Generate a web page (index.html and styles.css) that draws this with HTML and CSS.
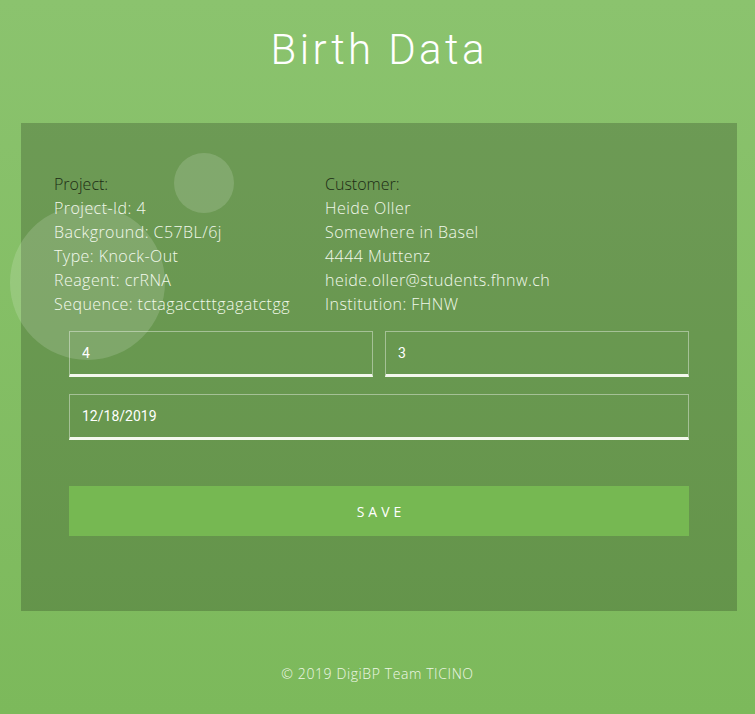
FILE: index.html
```html
<!DOCTYPE html>
<html>
<head>
<meta charset="utf-8">
<link rel="stylesheet" href="styles.css">
</head>
<body>
<div class="page">
  <span class="bubble bubble-lg"></span>
  <span class="bubble bubble-sm"></span>
  <h1 class="title">Birth Data</h1>
  <main class="card">
    <div class="info">
      <div class="info-col">
        <div class="info-head">Project:</div>
        <div>Project-Id: 4</div>
        <div>Background: C57BL/6j</div>
        <div>Type: Knock-Out</div>
        <div>Reagent: crRNA</div>
        <div>Sequence: tctagacctttgagatctgg</div>
      </div>
      <div class="info-col">
        <div class="info-head">Customer:</div>
        <div>Heide Oller</div>
        <div>Somewhere in Basel</div>
        <div>4444 Muttenz</div>
        <div>heide.oller@students.fhnw.ch</div>
        <div>Institution: FHNW</div>
      </div>
    </div>
    <form class="form">
      <div class="row">
        <input class="field" type="text" value="4">
        <input class="field" type="text" value="3">
      </div>
      <input class="field field-full" type="text" value="12/18/2019">
      <button class="save" type="button">SAVE</button>
    </form>
  </main>
  <footer class="footer">© 2019 DigiBP Team TICINO</footer>
</div>
</body>
</html>
```

FILE: styles.css
```css
html, body {
  margin: 0;
  padding: 0;
}
body {
  background: linear-gradient(to bottom, #8bc36e 0%, #7cb95b 100%);
  min-height: 714px;
  font-family: "Open Sans", "Noto Sans", sans-serif;
  font-weight: 300;
}
.page {
  position: relative;
  min-height: 714px;
  overflow: hidden;
  display: flex;
  flex-direction: column;
}
.bubble {
  position: absolute;
  border-radius: 50%;
  background: rgba(255, 255, 255, 0.15);
  z-index: 2;
  pointer-events: none;
}
.bubble-lg {
  left: 10px;
  top: 205px;
  width: 155px;
  height: 155px;
}
.bubble-sm {
  left: 174px;
  top: 153px;
  width: 60px;
  height: 60px;
}
.title {
  margin: 0;
  padding-top: 26px;
  height: 48px;
  line-height: 48px;
  text-align: center;
  font-family: Roboto, sans-serif;
  font-weight: 300;
  font-size: 42px;
  letter-spacing: 3.4px;
  text-indent: 3.4px;
  color: #ffffff;
}
.card {
  margin: 49px 18px 0 21px;
  padding: 49px 33px 75px;
  background: rgba(0, 0, 0, 0.2);
  position: relative;
  z-index: 1;
}
.info {
  display: grid;
  grid-template-columns: 271px auto;
  font-size: 16px;
  letter-spacing: 0.45px;
  line-height: 24px;
  color: #f1f8ea;
}
.info-head {
  color: #1c2c15;
  letter-spacing: 0;
}
.form {
  margin: 15px 15px 0;
  display: flex;
  flex-direction: column;
}
.row {
  display: grid;
  grid-template-columns: 1fr 1fr;
  gap: 12px;
}
.field {
  box-sizing: border-box;
  height: 46px;
  width: 100%;
  margin: 0;
  padding: 0 12px;
  background: transparent;
  border: 1px solid rgba(255, 255, 255, 0.4);
  border-bottom: 3px solid #f4f8ee;
  font-family: Roboto, sans-serif;
  font-size: 14px;
  color: #ffffff;
  outline: none;
}
.field-full {
  margin-top: 17px;
}
.save {
  margin-top: 46px;
  height: 50px;
  border: none;
  background: #76b852;
  color: #ffffff;
  font-family: "Open Sans", sans-serif;
  font-size: 14px;
  font-weight: 400;
  letter-spacing: 4px;
  text-indent: 4px;
}
.footer {
  margin-top: 53px;
  line-height: 20px;
  text-align: center;
  font-size: 14px;
  color: #eef7e6;
  letter-spacing: 0.6px;
}
```
